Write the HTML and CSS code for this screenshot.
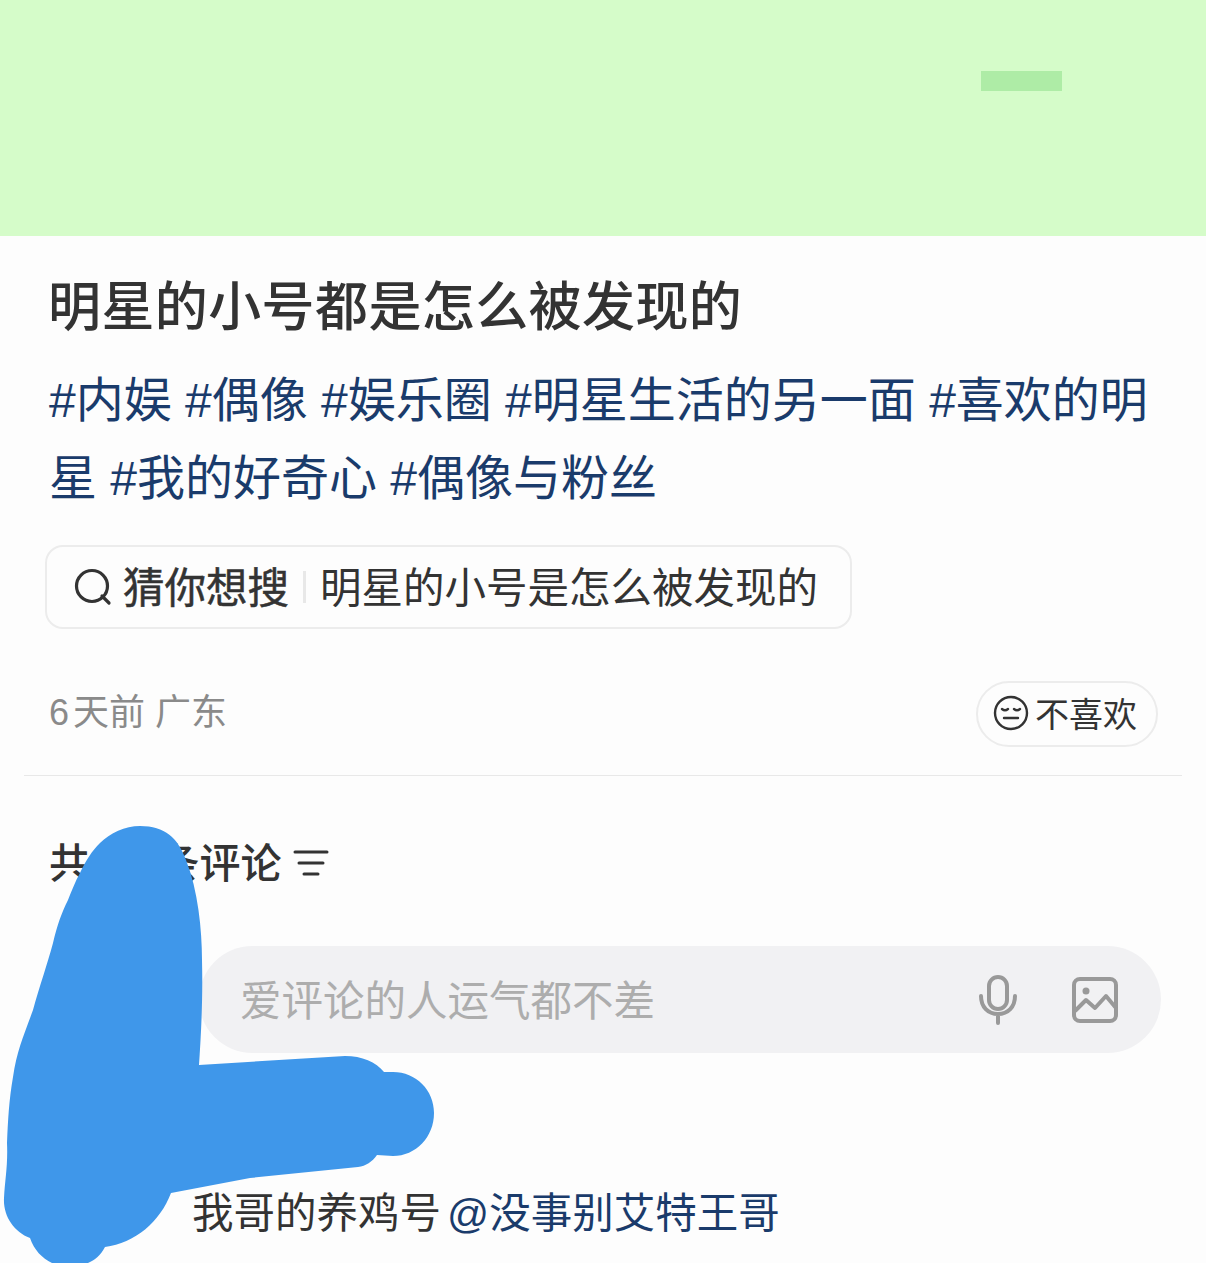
FILE: index.html
```html
<!DOCTYPE html>
<html lang="zh-CN">
<head>
  <meta charset="UTF-8" />
  <meta name="viewport" content="width=device-width, initial-scale=1.0" />
  <title>明星的小号都是怎么被发现的</title>
  <link rel="stylesheet" href="styles.css">
</head>
<body>
  <div class="page">
    <div class="hero"><span class="hero-mark"></span></div>

    <div class="post">
      <h1>明星的小号都是怎么被发现的</h1>
      <p class="tags">#内娱 #偶像 #娱乐圈 #明星生活的另一面 #喜欢的明星 #我的好奇心 #偶像与粉丝</p>

      <div class="guess">
        <svg class="guess-icon" viewBox="0 0 38 38" width="38" height="38">
          <circle cx="18" cy="18" r="15.5" fill="none" stroke="#333" stroke-width="3.2"/>
          <path d="M28 28l7 7" fill="none" stroke="#333" stroke-width="3.2" stroke-linecap="round"/>
        </svg>
        <span class="guess-label">猜你想搜</span>
        <span class="guess-line"></span>
        <span class="guess-text">明星的小号是怎么被发现的</span>
      </div>

      <div class="meta">
        <span class="meta-time"><span class="meta-num">6</span>天前 广东</span>
        <button class="dislike">
          <svg viewBox="0 0 36 36" width="36" height="36" fill="none" stroke="#333" stroke-width="2.4" stroke-linecap="round">
            <circle cx="18" cy="18" r="16"/>
            <path d="M9 14c2 1.6 4 1.6 6 0M21 14c2 1.6 4 1.6 6 0M11 23h14"/>
          </svg>
          不喜欢
        </button>
      </div>
    </div>

    <div class="comments">
      <div class="comments-head">
        <span>共 58 条评论</span>
        <svg viewBox="0 0 36 30" width="36" height="30" fill="none" stroke="#333" stroke-width="3" stroke-linecap="round">
          <path d="M2 3h32M6 14h24M11 25h14"/>
        </svg>
      </div>

      <div class="input-row">
        <span class="input-text">爱评论的人运气都不差</span>
        <svg class="input-icon" viewBox="0 0 38 50" width="38" height="50" fill="none" stroke="#999" stroke-width="4" stroke-linecap="round">
          <rect x="10" y="2" width="18" height="32" rx="9"/>
          <path d="M2 21c0 11 7 18 17 18s17-7 17-18M19 39v9"/>
        </svg>
        <svg class="input-icon" viewBox="0 0 46 46" width="46" height="46" fill="none" stroke="#999" stroke-width="4" stroke-linejoin="round">
          <rect x="2" y="2" width="42" height="42" rx="6"/>
          <circle cx="14" cy="14" r="3.5" fill="#999" stroke="none"/>
          <path d="M3 34l11-11 9 8 11-12 10 12"/>
        </svg>
      </div>

      <p class="comment">我哥的养鸡号<span class="mention">@没事别艾特王哥</span></p>

      <div class="comment-tools">
        <svg viewBox="0 0 30 24" width="30" height="24" fill="none" stroke="#555" stroke-width="3">
          <path d="M15 8C12 2 2 1 2 9c0 6 8 11 13 14 5-3 13-8 13-14 0-8-10-7-13-1z"/>
        </svg>
      </div>
    </div>

    <svg class="scribble" viewBox="0 0 1206 1263" width="1206" height="1263">
      <path fill="#3f97ea" d="M140 826C165 826 178 838 186 860C198 890 202 930 202 960C203 1000 201 1035 199 1065L345 1056C362 1056 376 1062 384 1072L393 1072C416 1072 434 1090 434 1113C434 1137 416 1156 393 1156L377 1155C372 1162 366 1166 358 1167L250 1178L171 1193C160 1222 135 1243 105 1247C100 1256 95 1260 88 1263L52 1263C42 1258 34 1250 30 1238C14 1232 3 1216 4 1198C5 1180 8 1165 7 1143C8 1120 9 1100 13 1077C17 1050 24 1035 33 1010C40 985 47 965 53 943C57 925 62 912 68 900C72 890 75 882 80 873C86 860 92 851 100 843C110 833 125 826 140 826Z"/>
    </svg>
  </div>
</body>
</html>
```

FILE: styles.css
```css
* {
  box-sizing: border-box;
}

html, body {
  margin: 0;
  height: 100%;
  overflow: hidden;
}

body {
  background: #fdfdfd;
  color: #333;
  font-family: "Liberation Sans", "Noto Sans CJK SC", sans-serif;
}

.page {
  position: relative;
  width: 1206px;
  height: 1263px;
  overflow: hidden;
}

.hero {
  height: 236px;
  background: #d5fcc9;
  padding: 71px 0 0 981px;
}

.hero-mark {
  display: block;
  width: 81px;
  height: 20px;
  background: #aeeca6;
}

.post {
  margin: 0 24px;
  padding: 0 0 0 25px;
  height: 540px;
  border-bottom: 1px solid #e8e8e8;
}

h1 {
  margin: 0 0 0 -1px;
  padding-top: 41px;
  font-size: 53px;
  line-height: 62px;
  font-weight: 500;
  letter-spacing: 0.4px;
}

.tags {
  margin: 23px 0 0;
  width: 1110px;
  font-size: 48px;
  line-height: 78px;
  color: #1a3b6b;
}

.guess {
  display: flex;
  align-items: center;
  width: 807px;
  height: 84px;
  margin: 27px 0 0 -4px;
  padding-left: 27px;
  border: 2px solid #ececec;
  border-radius: 18px;
  font-size: 41.5px;
}

.guess-icon {
  flex: none;
}

.guess-label {
  margin-left: 11px;
  padding-bottom: 4px;
  -webkit-text-stroke: 0.5px #333;
}

.guess-line {
  width: 3px;
  height: 32px;
  margin: 0 14px;
  background: #e8e8e8;
}

.guess-text {
  padding-bottom: 4px;
}

.meta {
  display: flex;
  justify-content: space-between;
  align-items: center;
  margin-top: 52px;
  padding-right: 24px;
}

.meta-time {
  padding-bottom: 10px;
  font-size: 36px;
  color: #8a8a8a;
}

.meta-num {
  margin-right: 4px;
}

.dislike {
  display: flex;
  align-items: center;
  gap: 6px;
  width: 182px;
  height: 66px;
  padding: 0 0 3px 15px;
  background: none;
  border: 2px solid #ececec;
  border-radius: 33px;
  font: inherit;
  font-size: 34px;
  color: #333;
}

.comments {
  padding: 62px 45px 0 49px;
}

.comments-head {
  display: flex;
  align-items: center;
  gap: 12px;
  font-size: 41px;
  line-height: 52px;
  font-weight: 500;
}

.input-row {
  display: flex;
  align-items: center;
  height: 107px;
  margin: 56px 0 0 150px;
  padding: 0 43px 0 41px;
  background: #f1f1f3;
  border-radius: 54px;
}

.input-text {
  flex: 1;
  padding-bottom: 4px;
  font-size: 41.5px;
  color: #adadad;
}

.input-icon {
  flex: none;
  margin-left: 55px;
}

.comment {
  margin: 135px 0 0 143px;
  font-size: 41.5px;
  line-height: 52px;
}

.mention {
  margin-left: 6px;
  color: #1a3b6b;
}

.comment-tools {
  display: flex;
  justify-content: flex-end;
  margin: 23px 48px 0 0;
}

.scribble {
  position: absolute;
  top: 0;
  left: 0;
  pointer-events: none;
}
```
